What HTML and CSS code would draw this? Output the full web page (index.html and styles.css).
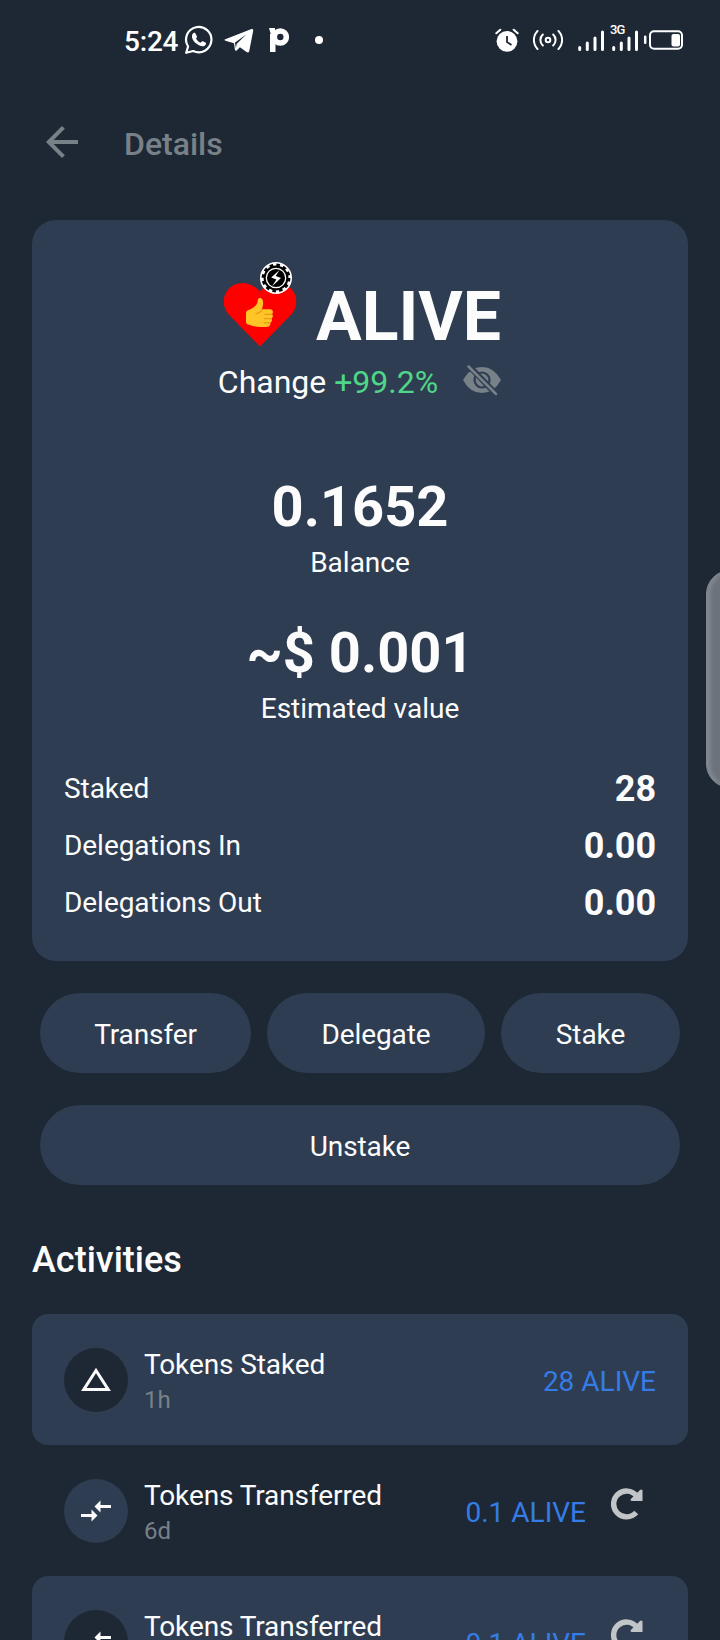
FILE: index.html
```html
<!DOCTYPE html>
<html lang="en">
<head>
	<meta charset="utf-8">
	<meta name="viewport" content="width=device-width, initial-scale=1.0">
	<title>Details</title>
	<link rel="stylesheet" href="styles.css">
</head>
<body>
	<!-- shared icons -->
	<svg class="sprite" width="0" height="0">
		<symbol id="ic-transfer" viewBox="0 0 24 24">
			<path fill="currentColor" d="M9.01 14H2v2h7.01v3L13 15l-3.99-4v3zm5.98-1v-3H22V8h-7.01V5L11 9l3.99 4z"/>
		</symbol>
		<symbol id="ic-reload" viewBox="0 0 32 32">
			<path fill="none" stroke="currentColor" stroke-width="5.4" d="M25.600 7.900A12.900 12.900 0 1 0 25.200 24.500"/>
			<path fill="currentColor" d="M31.500 2.500q-1-1.700-2.500-.5L19.800 11q-1 1.600.8 2H31.500z"/>
		</symbol>
	</svg>

	<div class="screen">
		<div class="status-bar">
			<div class="time">5:24</div>
			<svg class="ic-whatsapp" width="30" height="30" viewBox="0 0 30 30">
				<path fill="none" stroke="#fff" stroke-width="2.2" stroke-linejoin="round" d="M2.2 27.8l1.9-6.3A12.7 12.7 0 1 1 9.2 26z"/>
				<path fill="#fff" d="M8.3 9.4c.8-1.7 2.3-2 3-1.2l1.7 3.4c.1.8-.5 1.3-1 2 .9 1.9 2.5 3.3 4.600 4.200l1.500-1.500c.7-.4 3.500 1 3.900 1.600.2 1.300-.8 2.900-2.300 3.300-2.500.6-5.700-.9-8-3.100-2.400-2.300-4.500-5.500-3.400-8.700z"/>
			</svg>
			<svg class="ic-telegram" width="30" height="26" viewBox="0 0 30 26">
				<path fill="#fff" d="M1.300 11.300L27.500 1q1.900-.4 1.700 1.700L25.200 23.200q-.6 2.100-2.600.9l-6.700-4.900-3.300 3.200q-1.600 1-1.800-1.300l-.8-5.800-8.600-2.600q-1.700-.8-.1-1.400zM11 14.500l.8 5.500 1-4.200 9.500-9.400z"/>
			</svg>
			<svg class="ic-app" width="20" height="26" viewBox="0 0 20 26">
				<circle cx="11.300" cy="10" r="6" fill="none" stroke="#fff" stroke-width="5.600"/>
				<rect x="1" y="7" width="5.500" height="18" fill="#fff"/>
				<path fill="#fff" d="M0 1h6v7H2z"/>
			</svg>
			<i class="dot"></i>

			<svg class="ic-alarm" width="24" height="24" viewBox="0 0 24 24">
				<circle cx="12" cy="13.300" r="10.400" fill="#fff"/>
				<path fill="none" stroke="#fff" stroke-width="2" stroke-linecap="round" d="M1.300 5.300l4-3.600M22.700 5.300l-4-3.600"/>
				<path fill="none" stroke="#1e2835" stroke-width="1.800" d="M12 8v6l4.500 3"/>
			</svg>
			<svg class="ic-hotspot" width="30" height="22" viewBox="0 0 30 22">
				<g fill="none" stroke="#fff" stroke-width="2" stroke-linecap="round">
					<circle cx="15" cy="11" r="2.300"/>
					<path d="M9.800 5.500a7.500 7.500 0 0 0 0 11M20.200 5.500a7.500 7.500 0 0 1 0 11M4.500 2a13 13 0 0 0 0 18M25.500 2a13 13 0 0 1 0 18"/>
				</g>
			</svg>
			<svg class="ic-signal" width="27" height="22" viewBox="0 0 27 22">
				<path stroke="#fff" stroke-width="3" stroke-linecap="round" d="M1.700 17.500v2M9.300 13v6.500M17 8v11.500M24.500 2v17.500"/>
			</svg>
			<div class="signal-2">
				<span class="net">3G</span>
				<svg class="ic-signal" width="27" height="22" viewBox="0 0 27 22">
					<path stroke="#fff" stroke-width="3" stroke-linecap="round" d="M1.700 17.500v2M9.300 13v6.500M17 8v11.500M24.500 2v17.500"/>
				</svg>
			</div>
			<svg class="ic-battery" width="40" height="22" viewBox="0 0 40 22">
				<rect x="7" y="2.200" width="32" height="17.600" rx="4" fill="none" stroke="#fff" stroke-width="2"/>
				<rect x="28.500" y="5" width="8.500" height="12.500" rx="2" fill="#fff"/>
				<path stroke="#fff" stroke-width="2.500" stroke-linecap="round" d="M2.200 7.700v6"/>
			</svg>
		</div>

		<div class="header">
			<svg class="back" width="48" height="48" viewBox="0 0 24 24">
				<path fill="currentColor" d="M20 11H7.830l5.590-5.590L12 4l-8 8 8 8 1.410-1.410L7.830 13H20v-2z"/>
			</svg>
			<div class="title">Details</div>
		</div>

		<div class="card">
			<div class="token">
				<svg class="logo" width="80" height="88" viewBox="0 0 80 88">
					<path fill="#f00" d="M41 84.500L10.700 53.500A19 19 0 0 1 9.500 27C17 19 31 18.500 41 29.500C51 18.500 65 19 72.500 27A19 19 0 0 1 71.300 53.500z"/>
					<path fill="#ffc527" d="M27 51.500c0-2.500 1.500-3.600 4-4 4.500-2 7.500-5.300 7.700-8.500.1-2.500 1.200-3.500 2.900-2.900 3.200 1 3 6.500 1.300 11.200h8c2 0 3.100 1.200 3 2.800 0 1-.5 1.600-1 2 1.500 1.700 1 3.700-.5 4.500 1 1.700.4 3.500-1.200 4.100.5 2.300-.7 3.900-2.800 4-6.300.5-13.400.5-17.400-2-2.600.2-4-.7-4-3.100z"/>
					<path fill="none" stroke="#e89b16" stroke-width="1.300" stroke-linecap="round" d="M53 52.300h-7M52.300 56.700h-6.800M51 60.800h-5.800M37 51.500c3-.2 5.100-1.700 6-4.200"/>
					<circle cx="57" cy="16" r="16" fill="#fff"/>
					<circle cx="57" cy="16" r="12.400" fill="#000"/>
					<circle cx="57" cy="16" r="12.900" fill="none" stroke="#000" stroke-width="3" stroke-dasharray="3.500 3.254"/>
					<circle cx="57" cy="16" r="9.700" fill="none" stroke="#fff" stroke-width="1.300"/>
					<path fill="#fff" d="M60.500 8l-8.300 7.600 5.200 2-4.400 6.700 9-8.200-5.300-2z"/>
				</svg>
				<div class="symbol">ALIVE</div>
			</div>
			<div class="change">
				<div>Change <span class="up">+99.2%</span></div>
				<svg width="40" height="32" viewBox="0 0 40 32">
					<path fill="#788187" d="M1 16Q8 3 20 3t19 13Q32 29 20 29T1 16z"/>
					<circle cx="20" cy="16" r="7.500" fill="none" stroke="#2e3d51" stroke-width="2.200"/>
					<path fill="#2e3d51" d="M20 12.500l4 3.500-3.500 3.500z"/>
					<path stroke="#2e3d51" stroke-width="6" d="M5 0l30 31"/>
					<path stroke="#788187" stroke-width="2.500" stroke-linecap="round" d="M6.500 2.500L34 30"/>
				</svg>
			</div>

			<div class="amount">0.1652</div>
			<div class="amount-label">Balance</div>
			<div class="amount value">~$ 0.001</div>
			<div class="amount-label">Estimated value</div>

			<div class="details">
				<div class="detail"><span>Staked</span><b>28</b></div>
				<div class="detail"><span>Delegations In</span><b>0.00</b></div>
				<div class="detail"><span>Delegations Out</span><b>0.00</b></div>
			</div>
		</div>

		<div class="actions">
			<div class="btn">Transfer</div>
			<div class="btn">Delegate</div>
			<div class="btn">Stake</div>
			<div class="btn">Unstake</div>
		</div>

		<div class="section-title">Activities</div>

		<div class="activities">
			<div class="item">
				<div class="icon">
					<svg width="32" height="26" viewBox="0 0 32 26"><path fill="none" stroke="currentColor" stroke-width="3" d="M16 3.500L3.800 22.500h24.400z"/></svg>
				</div>
				<div class="text">
					<div class="name">Tokens Staked</div>
					<div class="ago">1h</div>
				</div>
				<div class="sum">28 ALIVE</div>
			</div>
			<div class="item">
				<div class="icon"><svg width="36" height="36"><use href="#ic-transfer"/></svg></div>
				<div class="text">
					<div class="name">Tokens Transferred</div>
					<div class="ago">6d</div>
				</div>
				<div class="sum">0.1 ALIVE</div>
				<svg class="reload" width="32" height="32"><use href="#ic-reload"/></svg>
			</div>
			<div class="item">
				<div class="icon"><svg width="36" height="36"><use href="#ic-transfer"/></svg></div>
				<div class="text">
					<div class="name">Tokens Transferred</div>
				</div>
				<div class="sum">0.1 ALIVE</div>
				<svg class="reload" width="32" height="32"><use href="#ic-reload"/></svg>
			</div>
		</div>

		<div class="edge-handle"></div>
	</div>
</body>
</html>
```
FILE: styles.css
```css
/* global */
	*,
	:after,
	:before {
		box-sizing: border-box;
	}
	body {
		margin: 0;
		color: #fcfcfc;
		font-family: Roboto, "Liberation Sans", sans-serif;
		font-size: 28px;
		background: #1e2835;
	}
	svg {display:block;flex:none;}
	.sprite {position:absolute;}
	.screen {
		position: relative;
		width: 720px;
		height: 1640px;
		overflow: hidden;
		background: #1e2835;
	}
/* global end */

/* status bar */
	.status-bar {
		display: flex;
		align-items: center;
		height: 80px;
		padding: 0 37px 0 124px;
		color: #fff;
	}
	.status-bar .time {width:60px;line-height:32px;padding-top:4px;font-weight:500;letter-spacing:-.2px;white-space:nowrap;}
	.status-bar .ic-telegram {margin:2px 0 0 10px;}
	.status-bar .ic-app {margin-left:15px;}
	.status-bar .dot {width:8px;height:8px;margin-left:26px;border-radius:50%;background:#fff;}
	.status-bar .ic-alarm {margin-left:auto;}
	.status-bar .ic-hotspot {margin-left:14px;}
	.status-bar .ic-signal {margin:1px 0 0 15px;}
	.signal-2 {position:relative;margin-left:7px;}
	.signal-2 .ic-signal {margin-left:0;}
	.signal-2 .net {
		position: absolute;
		left: -2px;
		top: -6px;
		font-size: 13px;
		line-height: 13px;
		font-weight: 500;
		letter-spacing: -1px;
	}
	.status-bar .ic-battery {margin-left:4px;}
/* status bar end */

/* header */
	.header {
		display: flex;
		align-items: center;
		height: 124px;
		padding: 4px 38px 0;
		color: #788187;
	}
	.header .back {margin-top:-4px;}
	.header .title {margin-left:38px;font-size:32px;line-height:40px;font-weight:500;}
/* header end */

/* token card */
	.card {
		height: 741px;
		margin: 16px 32px 0;
		padding: 57px 32px 0;
		border-radius: 24px;
		background: #2e3d51;
		text-align: center;
	}
	.token {display:flex;justify-content:center;height:80px;}
	.token .logo {margin-top:-15px;}
	.token .symbol {margin-left:17px;font-size:68px;line-height:80px;font-weight:700;}
	.change {
		display: flex;
		align-items: center;
		justify-content: center;
		margin-top: 6px;
		font-size: 32px;
		line-height: 38px;
	}
	.change .up {color:#4fd688;}
	.change svg {margin:-4px 0 0 24px;}

	.amount {margin-top:73px;font-size:56px;line-height:66px;font-weight:700;}
	.amount.value {margin-top:41px;}
	.amount-label {margin-top:7px;line-height:32px;}

	.details {margin-top:35px;letter-spacing:-.05px;}
	.detail {display:flex;justify-content:space-between;line-height:57px;}
	.detail b {padding-top:1px;font-size:36px;line-height:57px;height:57px;}
/* token card end */

/* buttons */
	.actions {display:flex;flex-wrap:wrap;gap:32px 16px;margin:32px 40px 0;}
	.btn {
		flex: 1 1 auto;
		height: 80px;
		padding: 0 48px;
		border-radius: 40px;
		background: #2e3d51;
		line-height: 84px;
		letter-spacing: -.1px;
		text-align: center;
	}
	.btn:nth-child(1) {flex:0 0 211px;}
	.btn:nth-child(2) {flex:0 0 218px;}
/* buttons end */

/* activities */
	.section-title {margin:54px 32px 0;font-size:36px;line-height:42px;font-weight:500;}
	.activities {margin:33px 32px 0;}
	.item {
		display: flex;
		height: 131px;
		padding: 34px 32px 0;
		border-radius: 16px;
	}
	.item:nth-child(odd) {background:#2e3d51;}
	.item .icon {
		display: flex;
		align-items: center;
		justify-content: center;
		width: 64px;
		height: 64px;
		border-radius: 50%;
		background: #2e3d51;
	}
	.item:nth-child(odd) .icon {background:#1e2835;}
	.item .text {flex:1;margin-left:16px;}
	.item .name {line-height:34px;letter-spacing:-.1px;}
	.item .ago {margin-top:4px;color:#788187;font-size:24px;line-height:28px;}
	.item .sum {color:#357ce6;line-height:67px;}
	.item .reload {margin:9px 13px 0 25px;color:#c1c5c7;}
/* activities end */

	.edge-handle {
		position: absolute;
		left: 706px;
		top: 570px;
		width: 48px;
		height: 218px;
		border: 1px solid #7f868e;
		border-radius: 28px;
		background: #6c737c;
		box-shadow: inset 3px 0 4px #858b93;
	}
```
